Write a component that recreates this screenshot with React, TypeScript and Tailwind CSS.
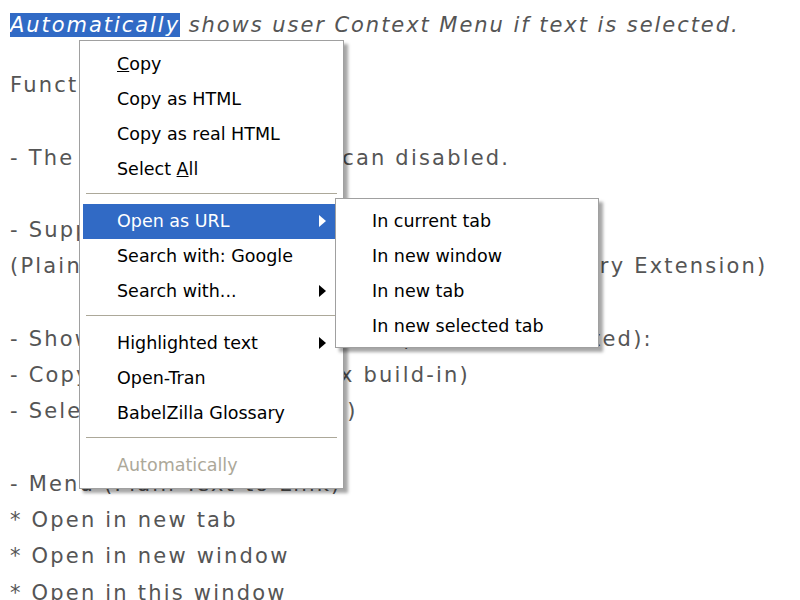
import React from 'react';

const lines: string[] = [
  'Functions:',
  '',
  '- The single menu entries can disabled.',
  '',
  '- Support for some Dictionaries',
  '(Plain Text to Link OpenTran, BabelZilla Glossary Extension)',
  '',
  '- Show following menu entries (if text is selected):',
  '- Copy as HTML (via Firefox build-in)',
  '- Select All (Firefox buildin)',
  '',
  '- Menu (Plain Text to Link)',
  '* Open in new tab',
  '* Open in new window',
  '* Open in this window',
];

type Item =
  | { kind: 'sep' }
  | { kind: 'item'; label: React.ReactNode; sub?: boolean; active?: boolean; disabled?: boolean };

const mainItems: Item[] = [
  { kind: 'item', label: <><span className="underline">C</span>opy</> },
  { kind: 'item', label: 'Copy as HTML' },
  { kind: 'item', label: 'Copy as real HTML' },
  { kind: 'item', label: <>Select <span className="underline">A</span>ll</> },
  { kind: 'sep' },
  { kind: 'item', label: 'Open as URL', sub: true, active: true },
  { kind: 'item', label: 'Search with: Google' },
  { kind: 'item', label: 'Search with...', sub: true },
  { kind: 'sep' },
  { kind: 'item', label: 'Highlighted text', sub: true },
  { kind: 'item', label: 'Open-Tran' },
  { kind: 'item', label: 'BabelZilla Glossary' },
  { kind: 'sep' },
  { kind: 'item', label: 'Automatically', disabled: true },
];

const subItems = ['In current tab', 'In new window', 'In new tab', 'In new selected tab'];

const Arrow = ({ white }: { white?: boolean }) => (
  <svg width="7" height="12" viewBox="0 0 7 12" className="absolute right-[14px] top-[11px]">
    <path d="M0 0 L7 6 L0 12 Z" fill={white ? '#ffffff' : '#000000'} />
  </svg>
);

const MenuRow = ({ item }: { item: Item }) => {
  if (item.kind === 'sep') {
    return (
      <div className="pt-[6px] pb-[10px] px-[3px]">
        <div className="h-px bg-[#aca899]" />
      </div>
    );
  }
  return (
    <div
      className={`relative h-[35px] flex items-center pl-[34px] whitespace-nowrap ${
        item.active ? 'bg-[#316ac5] text-white' : item.disabled ? 'text-[#aca899]' : 'text-black'
      }`}
    >
      <span className="whitespace-pre">{item.label}</span>
      {item.sub && <Arrow white={item.active} />}
    </div>
  );
};

export default function App() {
  return (
    <div className="relative w-[800px] h-[600px] overflow-hidden bg-white">
      {/* page text */}
      <div className="pl-[10px] pt-[7px] font-['DejaVu_Sans',sans-serif] text-[21px] tracking-[2.2px] text-[#555]">
        <p className="italic leading-[36px] whitespace-pre tracking-[1.95px]">
          <span className="bg-[#316ac5] text-white">Automatically</span> shows user Context Menu if text is selected.
        </p>
        <div className="mt-[24px] leading-[36px]">
          {lines.map((l, i) => (
            <div key={i} className="h-[36.25px] whitespace-pre">
              {l}
            </div>
          ))}
        </div>
      </div>

      {/* context menu */}
      <div className="absolute left-[79px] top-[40px] w-[265px] border border-[#a0a0a0] bg-white pt-[6px] pb-[5px] px-[3px] shadow-[4px_4px_3px_rgba(0,0,0,0.35)] font-['DejaVu_Sans',sans-serif] text-[17.5px]">
        {mainItems.map((it, i) => (
          <MenuRow key={i} item={it} />
        ))}
      </div>

      {/* submenu */}
      <div className="absolute left-[335px] top-[198px] w-[264px] border border-[#a0a0a0] bg-white pt-[5px] pb-[3px] px-[3px] shadow-[4px_4px_3px_rgba(0,0,0,0.35)] font-['DejaVu_Sans',sans-serif] text-[17.5px]">
        {subItems.map((s) => (
          <div key={s} className="h-[35px] flex items-center pl-[33px] whitespace-nowrap text-black">
            {s}
          </div>
        ))}
      </div>
    </div>
  );
}
